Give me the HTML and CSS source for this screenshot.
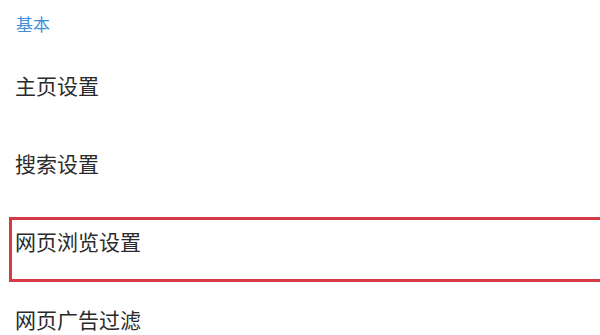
FILE: index.html
```html
<!DOCTYPE html>
<html lang="zh">
<head>
<meta charset="utf-8">
<link rel="stylesheet" href="styles.css">
</head>
<body>
<div class="section-title">基本</div>
<div class="row">主页设置</div>
<div class="row">搜索设置</div>
<div class="row row-marked">网页浏览设置</div>
<div class="row row-last">网页广告过滤</div>
</body>
</html>
```
FILE: styles.css
```css
html, body {
  margin: 0;
  padding: 0;
  background: #ffffff;
  overflow: hidden;
}
body {
  width: 600px;
  height: 335px;
  font-family: "Noto Sans CJK SC", "Noto Sans", sans-serif;
}
.section-title {
  height: 46px;
  box-sizing: border-box;
  padding: 14px 0 0 16px;
  font-size: 17px;
  line-height: 20px;
  color: #3f8fd8;
}
.row {
  height: 78px;
  display: flex;
  align-items: center;
  padding-left: 15px;
  font-size: 21px;
  line-height: 31px;
  color: #2b2b2b;
}
.row-last {
  height: 55px;
  align-items: flex-end;
}
.row-marked {
  position: relative;
}
.row-marked::after {
  content: "";
  position: absolute;
  left: 9px;
  right: -10px;
  top: 15px;
  height: 59px;
  border: 3px solid #d63a44;
}
```
